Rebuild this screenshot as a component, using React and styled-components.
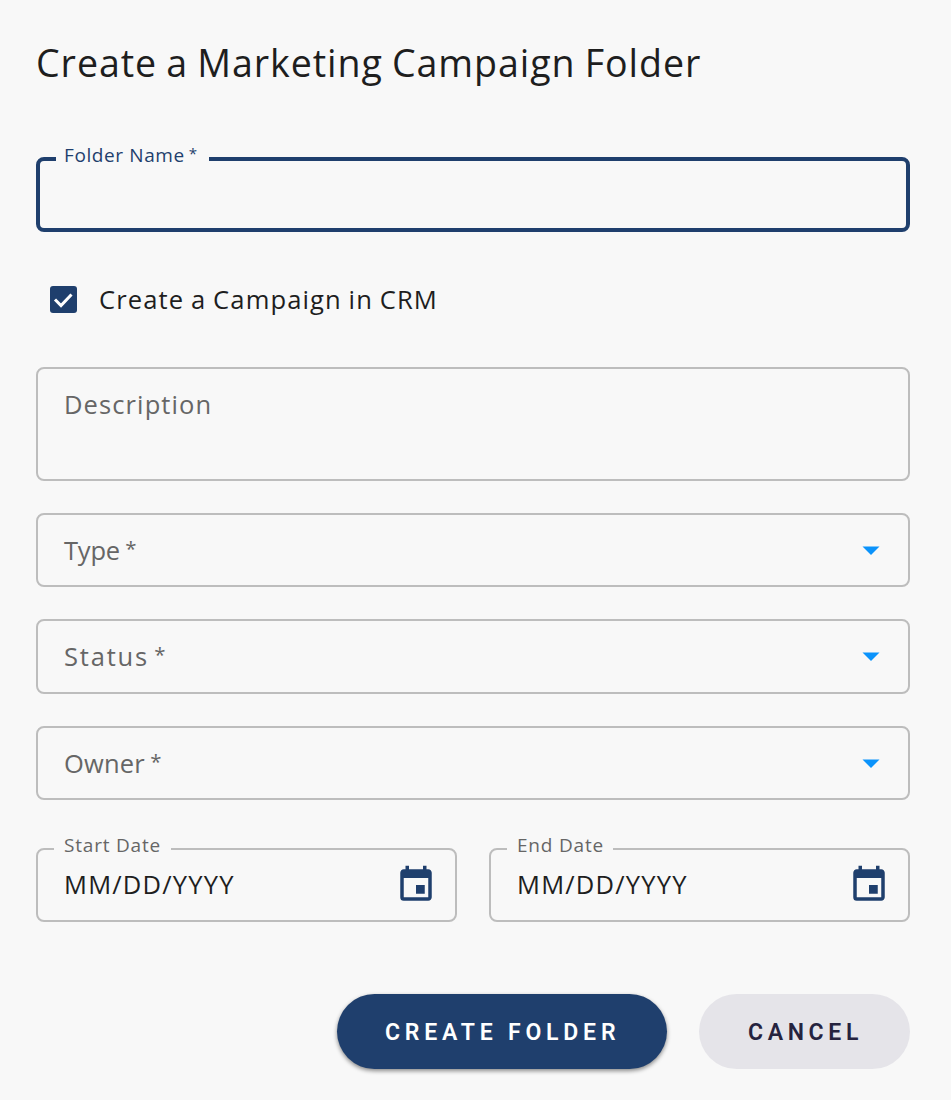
import React from "react";
import styled, { createGlobalStyle } from "styled-components";
import { MdEvent } from "react-icons/md";

const GlobalStyle = createGlobalStyle`
  * {
    box-sizing: border-box;
  }
  body {
    margin: 0;
    background: #f8f8f8;
    color: #1e1e1e;
    font-family: "Open Sans", "Liberation Sans", sans-serif;
  }
`;

const Dialog = styled.form`
  display: flex;
  flex-direction: column;
  min-height: 1100px;
  padding: 36px 41px 31px 36px;
`;
const Title = styled.h1`
  margin: 0 0 67px;
  font-size: 37.6px;
  line-height: 54px;
  font-weight: 400;
  letter-spacing: 0.94px;
  word-spacing: -1.6px;
  white-space: nowrap;
`;
const Field = styled.div`
  position: relative;
  display: flex;
  flex: ${(props) => (props.$grow ? "1" : "none")};
  align-items: ${(props) => (props.$multiline ? "flex-start" : "center")};
  justify-content: space-between;
  height: ${(props) => props.$height || 74}px;
  margin-bottom: ${(props) => props.$gap || 0}px;
  padding: ${(props) => (props.$multiline ? "17px 26px" : "0 26px")};
  border: ${(props) => (props.$focused ? "4px solid #1f3f6d" : "2px solid #bdbdbd")};
  border-radius: 8px;
`;
const Placeholder = styled.span`
  margin-top: -1px;
  color: #666;
  font-size: 25.5px;
  line-height: 38px;
  letter-spacing: ${(props) => props.$spacing ?? 1.1}px;
  white-space: nowrap;
`;
const Value = styled(Placeholder)`
  margin-top: -2px;
  color: #1e1e1e;
`;
const Required = styled.span`
  display: inline-block;
  margin-left: 0.26em;
  font-size: 0.8em;
  line-height: 1;
  letter-spacing: 0;
  transform: translateY(-0.22em);
`;
// sits over the outline and cuts the notch in it
const FloatingLabel = styled.label`
  position: absolute;
  top: ${(props) => (props.$focused ? -19 : -18)}px;
  left: 16px;
  width: ${(props) => props.$width}px;
  padding-left: ${(props) => (props.$focused ? 8 : 10)}px;
  background: #f8f8f8;
  color: ${(props) => (props.$focused ? "#1f3f6d" : "#666")};
  font-size: 19px;
  line-height: 26px;
  letter-spacing: ${(props) => (props.$focused ? 0.6 : 0.8)}px;
  white-space: nowrap;
`;
const CheckRow = styled.label`
  display: flex;
  align-items: center;
  gap: 22px;
  height: 38px;
  margin: 48px 0 49px;
  padding-left: 14px;
  font-size: 25.6px;
  letter-spacing: 1.1px;
  word-spacing: -1px;
  white-space: nowrap;
`;
const CheckBox = styled.svg`
  flex: none;
  width: 27px;
  height: 27px;
`;
const Arrow = styled.svg`
  width: 18px;
  height: 9px;
  margin-right: 2px;
`;
const DateRow = styled.div`
  display: flex;
  gap: 32px;
  margin: 48px 0 72px;
`;
const EventIcon = styled(MdEvent)`
  width: 42px;
  height: 42px;
  margin-right: -8px;
  color: #1f3f6d;
`;
const Actions = styled.div`
  display: flex;
  justify-content: flex-end;
  gap: 32px;
`;
const Button = styled.button`
  width: ${(props) => (props.$primary ? 330 : 211)}px;
  height: 75px;
  padding: 2px 0 0 ${(props) => (props.$primary ? 48 : 49)}px;
  border: 0;
  border-radius: 38px;
  background: ${(props) => (props.$primary ? "#1f3f6d" : "#e5e4e9")};
  box-shadow: ${(props) => (props.$primary ? "0 2px 4px rgba(0, 0, 0, 0.45)" : "none")};
  color: ${(props) => (props.$primary ? "#fff" : "#25233f")};
  font-family: Roboto, "Liberation Sans", sans-serif;
  font-size: 23px;
  font-weight: 600;
  letter-spacing: ${(props) => (props.$primary ? 4.8 : 4.65)}px;
  text-align: left;
  white-space: nowrap;
`;

const SelectField = function ({ label, gap, height, spacing }) {
  return (
    <Field $gap={gap} $height={height}>
      <Placeholder $spacing={spacing}>
        {label}
        <Required>*</Required>
      </Placeholder>
      <Arrow viewBox="0 0 18 9">
        <path d="M0.5 0.5h17L9 9z" fill="#0b93fb" />
      </Arrow>
    </Field>
  );
};

const DateField = function ({ label, notch }) {
  return (
    <Field $grow>
      <FloatingLabel $width={notch}>{label}</FloatingLabel>
      <Value $spacing={1.2}>MM/DD/YYYY</Value>
      <EventIcon />
    </Field>
  );
};

const App = function () {
  return (
    <>
      <GlobalStyle />
      <Dialog>
        <Title>Create a Marketing Campaign Folder</Title>
        <Field $focused $height={75}>
          <FloatingLabel $focused $width={153}>
            Folder Name
            <Required>*</Required>
          </FloatingLabel>
        </Field>
        <CheckRow>
          <CheckBox viewBox="0 0 27 27">
            <rect width="27" height="27" rx="3" fill="#1f3f6d" />
            <path d="M5 13.5l6 6L21.5 8.5" fill="none" stroke="#fff" strokeWidth="3" />
          </CheckBox>
          Create a Campaign in CRM
        </CheckRow>
        <Field $multiline $height={114} $gap={32}>
          <Placeholder>Description</Placeholder>
        </Field>
        <SelectField label="Type" gap={32} spacing={-0.2} />
        <SelectField label="Status" height={75} gap={32} spacing={1.8} />
        <SelectField label="Owner" spacing={0.2} />
        <DateRow>
          <DateField label="Start Date" notch={117} />
          <DateField label="End Date" notch={106} />
        </DateRow>
        <Actions>
          <Button type="button" $primary>
            CREATE FOLDER
          </Button>
          <Button type="button">CANCEL</Button>
        </Actions>
      </Dialog>
    </>
  );
};

export default App;
